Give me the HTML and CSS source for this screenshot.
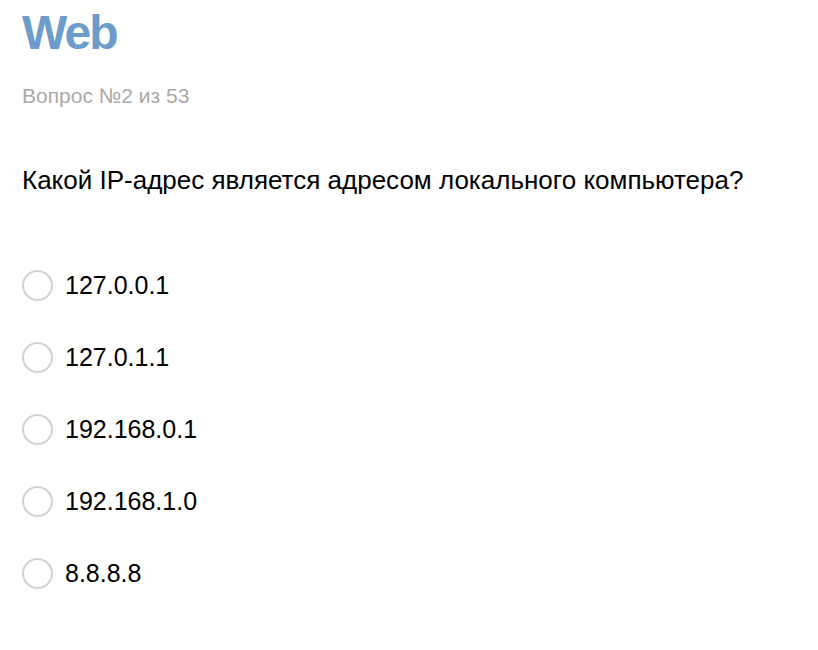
FILE: index.html
```html
<!DOCTYPE html>
<html lang="ru">
<head>
<meta charset="utf-8">
<link rel="stylesheet" href="styles.css">
</head>
<body>
<div class="page">
  <h1 class="title">Web</h1>
  <div class="counter">Вопрос №2 из 53</div>
  <div class="question">Какой IP-адрес является адресом локального компьютера?</div>
  <ul class="options">
    <li class="option"><span class="radio"></span><span class="label">127.0.0.1</span></li>
    <li class="option"><span class="radio"></span><span class="label">127.0.1.1</span></li>
    <li class="option"><span class="radio"></span><span class="label">192.168.0.1</span></li>
    <li class="option"><span class="radio"></span><span class="label">192.168.1.0</span></li>
    <li class="option"><span class="radio"></span><span class="label">8.8.8.8</span></li>
  </ul>
</div>
</body>
</html>
```
FILE: styles.css
```css
html, body {
  margin: 0;
  padding: 0;
  background: #fff;
}
body {
  font-family: "Liberation Sans", Arial, sans-serif;
  color: #000;
}
.page {
  padding: 5px 22px 0 22px;
}
.title {
  margin: 0;
  font-size: 48px;
  line-height: 56px;
  font-weight: bold;
  color: #6b9ccc;
  letter-spacing: -2px;
}
.counter {
  margin-top: 23px;
  font-size: 21px;
  line-height: 24px;
  color: #aba8a6;
}
.question {
  margin-top: 57px;
  font-size: 26px;
  line-height: 30px;
}
.options {
  list-style: none;
  margin: 74px 0 0;
  padding: 0;
  display: flex;
  flex-direction: column;
  gap: 40px;
}
.option {
  display: flex;
  align-items: center;
  gap: 12px;
  height: 32px;
}
.radio {
  width: 27px;
  height: 27px;
  border: 2px solid #d2d2d2;
  border-radius: 50%;
  flex: none;
}
.label {
  font-size: 25px;
  line-height: 32px;
}
```
